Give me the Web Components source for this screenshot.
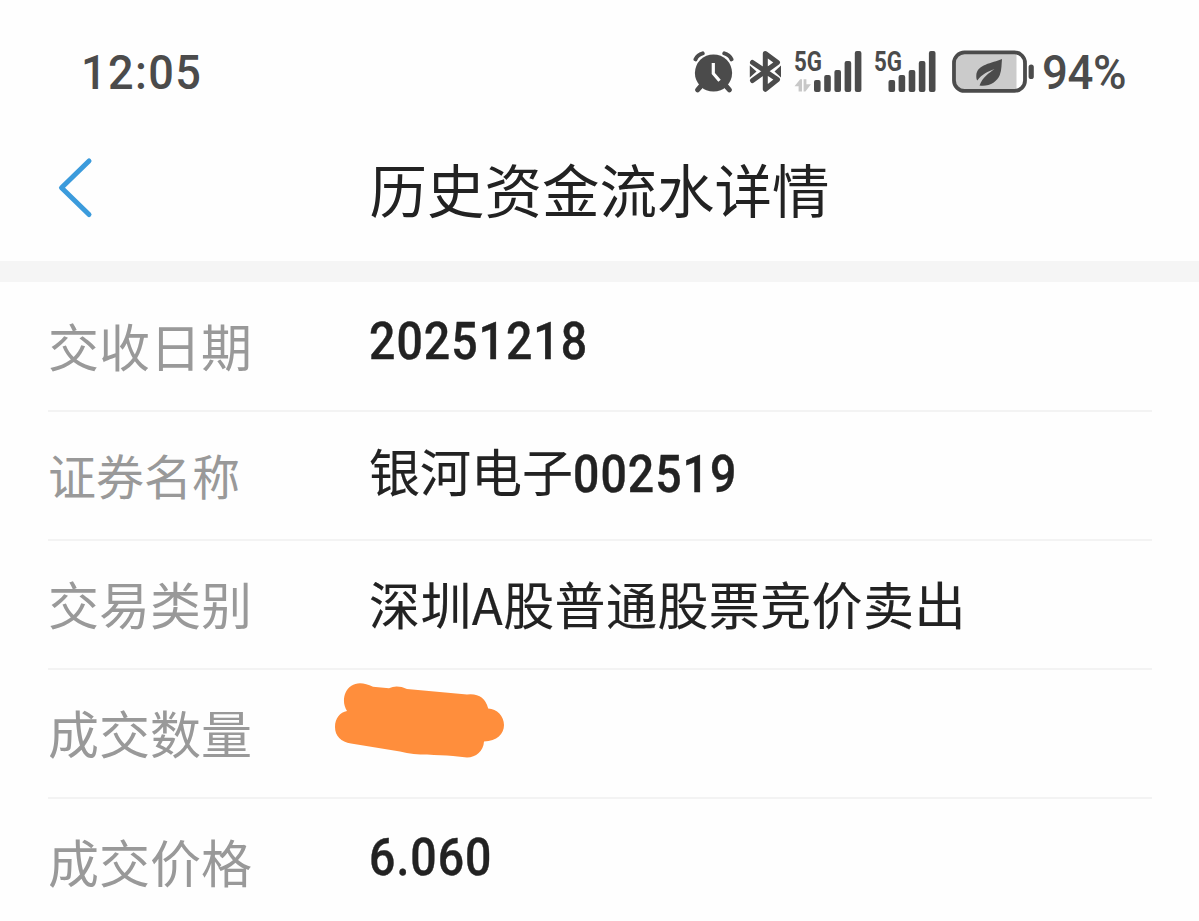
<!DOCTYPE html>
<html lang="zh-CN">
<head>
<meta charset="utf-8">
<meta name="viewport" content="width=device-width, initial-scale=1">
<title>历史资金流水详情</title>
<style>
    html, body{
        margin: 0;
        background: #fefefe;
    }

    body{
        height: 921px;
        overflow: hidden;
        font-family: Roboto, "Noto Sans CJK SC", sans-serif;
        color: #222;
    }
</style>
</head>
<body>
<flow-page>
    <status-bar slot="top" time="12:05" battery="94"></status-bar>
    <nav-header slot="top">历史资金流水详情</nav-header>
    <detail-row label="交收日期" class="number"><span>20251218</span></detail-row>
    <detail-row label="证券名称" class="compact">银河电子<span>002519</span></detail-row>
    <detail-row label="交易类别">深圳A股普通股票竞价卖出</detail-row>
    <detail-row label="成交数量"><marker-blot></marker-blot></detail-row>
    <detail-row label="成交价格" class="number"><span>6.060</span></detail-row>
</flow-page>

<script>
class FlowPage extends HTMLElement{
    constructor(){
        super();
        this.attachShadow({ mode: 'open' });
        this.shadowRoot.innerHTML = `
            <style>
                :host{
                    display: flex;
                    flex-direction: column;
                    height: 921px;
                    overflow: hidden;
                }

                .band{
                    flex: none;
                    height: 21px;
                    background: #f5f5f5;
                }

                main{
                    display: flex;
                    flex-direction: column;
                    padding: 1px 47px 0 48px;
                }
            </style>
            <slot name="top"></slot>
            <div class="band"></div>
            <main><slot></slot></main>
        `;
    }
}

class SignalBars extends HTMLElement{
    constructor(){
        super();
        this.attachShadow({ mode: 'open' });
    }

    connectedCallback(){
        let data = this.hasAttribute("data");
        // the data sim is wider, it has the up/down arrows before the bars
        let x = data ? 20 : 14.5;
        let step = data ? 10.2 : 10.1;
        let bars = [12, 17, 22, 31, 41].map((h, i) =>
            `<rect x="${x + i * step}" y="${42 - h}" width="6.6" height="${h}" rx="2"/>`
        ).join("");
        let arrows = data
            ? `<path fill="#c8c8c8" d="M0.5 36.2L6.2 29.2H8V41.5H4.6V36.2ZM9.6 29.2H12.4V34.3H17L11.4 41.5H9.6Z"/>`
            : "";
        this.shadowRoot.innerHTML = `
            <style>
                :host{
                    display: block;
                    width: ${data ? 68 : 62}px;
                    height: 42px;
                }

                svg{
                    display: block;
                    overflow: visible;
                }

                text{
                    font: 700 27px Roboto, sans-serif;
                }
            </style>
            <svg width="68" height="42" fill="#4b4b4b">
                <text x="0" y="20.5" textLength="28" lengthAdjust="spacingAndGlyphs">5G</text>
                ${bars}
                ${arrows}
            </svg>
        `;
    }
}

class StatusBar extends HTMLElement{
    constructor(){
        super();
        this.attachShadow({ mode: 'open' });
    }

    connectedCallback(){
        this.shadowRoot.innerHTML = `
            <style>
                :host{
                    display: flex;
                    justify-content: space-between;
                    flex: none;
                    box-sizing: border-box;
                    height: 144px;
                    padding: 43px 72px 0 81px;
                    color: #4b4b4b;
                    font-size: 49px;
                    font-weight: 500;
                    line-height: 60px;
                }

                .time{
                    letter-spacing: 1.5px;
                    transform: scaleX(0.92);
                    transform-origin: left;
                }

                .icons{
                    display: flex;
                    align-items: flex-start;
                }

                .icons > *{
                    flex: none;
                }

                svg, signal-bars{
                    display: block;
                    margin-top: 7px;
                }

                .battery{
                    width: 85px;
                    letter-spacing: -0.4px;
                    white-space: nowrap;
                    transform: scaleX(0.93);
                    transform-origin: left;
                }
            </style>
            <div class="time">${this.getAttribute("time")}</div>
            <div class="icons">
                <svg width="56" height="44" viewBox="0 0 56 44">
                    <g fill="none" stroke="#4b4b4b" stroke-linecap="round">
                        <path stroke-width="4" d="M2.5 9.3Q4.7 4.6 9.7 3.4M38.5 9.3Q36.3 4.6 31.3 3.4"/>
                        <path stroke-width="5" d="M8 36L4.6 39.8M33 36L36.4 39.8"/>
                    </g>
                    <circle cx="20.5" cy="23" r="18.6" fill="#4b4b4b"/>
                    <path d="M20.3 14.5V23.5L25.5 29.5" fill="none" stroke="#fff" stroke-width="3.2" stroke-linecap="square"/>
                </svg>
                <svg width="45" height="44" viewBox="0 0 45 44">
                    <path d="M3.5 12.5L28.5 29.5L16.3 39.3V3.5L28.5 12.5L3.5 30.5" fill="none" stroke="#4b4b4b" stroke-width="5" stroke-linejoin="round" stroke-linecap="round"/>
                    <path d="M0.8 15.5L7.5 21.5L0.8 27.5ZM32 15.5L25.5 21.5L32 27.5Z" fill="#4b4b4b"/>
                </svg>
                <signal-bars data style="margin-right: 12px"></signal-bars>
                <signal-bars style="margin-right: 16px"></signal-bars>
                <svg width="90" height="44" viewBox="0 0 90 44">
                    <rect x="2" y="2.5" width="71" height="38.5" rx="9" fill="#fff"/>
                    <path d="M11 4H64.5V39.5H11Q4 39.5 4 32.5V11Q4 4 11 4Z" fill="#cbcbcb"/>
                    <rect x="2" y="2.4" width="71" height="38.5" rx="10.5" fill="none" stroke="#4b4b4b" stroke-width="3.8"/>
                    <path d="M50 9C40 13.5 25 14 24.3 25.5C24.2 27.8 24.4 29 25.3 30.5C30 24 36 21.5 42.5 19C37 23 30.5 27.5 27.5 35.5C37 37 45 32 47.8 25C49.8 19.5 49.5 14 50 9Z" fill="#4b4b4b"/>
                    <rect x="76.6" y="14.5" width="5.2" height="14.5" rx="2.6" fill="#4b4b4b"/>
                </svg>
                <div class="battery">${this.getAttribute("battery")}%</div>
            </div>
        `;
    }
}

class NavHeader extends HTMLElement{
    constructor(){
        super();
        this.attachShadow({ mode: 'open' });
        this.shadowRoot.innerHTML = `
            <style>
                :host{
                    display: grid;
                    grid-template-columns: 140px 1fr 140px;
                    flex: none;
                    height: 117px;
                }

                svg{
                    display: block;
                    margin: 12px 0 0 56px;
                }

                h1{
                    margin: 0;
                    padding-top: 4px;
                    font: 400 57.5px/80px "Noto Sans CJK SC", sans-serif;
                    text-align: center;
                    white-space: nowrap;
                }
            </style>
            <svg width="40" height="64" viewBox="0 0 40 64">
                <path d="M33 5L5.5 31.8L33 58.5" fill="none" stroke="#3b9bdc" stroke-width="5" stroke-linecap="round" stroke-linejoin="round"/>
            </svg>
            <h1><slot></slot></h1>
        `;
    }
}

class DetailRow extends HTMLElement{
    constructor(){
        super();
        this.attachShadow({ mode: 'open' });
    }

    connectedCallback(){
        this.shadowRoot.innerHTML = `
            <style>
                :host{
                    display: grid;
                    grid-template-columns: 321px 1fr;
                    box-sizing: border-box;
                    height: 129px;
                    border-bottom: 2px solid #f3f3f3;
                }

                .label{
                    padding-top: 25px;
                    font: 400 51px/74px "Noto Sans CJK SC", sans-serif;
                    color: #999;
                }

                .value{
                    padding-top: 25px;
                    font: 400 51px/74px "Noto Sans CJK SC", sans-serif;
                    -webkit-text-stroke: 0.15px #222;
                    letter-spacing: 0.4px;
                    white-space: nowrap;
                }

                :host(.compact) .label{
                    font-size: 48px;
                }

                :host(.compact) .value{
                    padding-top: 21px;
                    letter-spacing: 0;
                }

                :host(.number) .value{
                    padding-top: 17px;
                }

                /* narrow digits with a wider gap */
                ::slotted(span){
                    display: inline-block;
                    font-family: Roboto, sans-serif;
                    font-weight: 500;
                    -webkit-text-stroke: 0.4px #222;
                    letter-spacing: 1.1px;
                    transform: scaleX(0.91);
                    transform-origin: left;
                }
            </style>
            <div class="label">${this.getAttribute("label")}</div>
            <div class="value"><slot></slot></div>
        `;
    }
}

class MarkerBlot extends HTMLElement{
    constructor(){
        super();
        this.attachShadow({ mode: 'open' });
        this.shadowRoot.innerHTML = `
            <style>
                :host{
                    display: block;
                    margin: -25px 0 0 -49px;
                }

                svg{
                    display: block;
                }
            </style>
            <svg width="200" height="100" viewBox="0 0 200 100">
                <path fill="#ff8e3c" d="M40 13.2Q46 13.2 53 16.8L69 18.2Q77 14.5 87 19L147 24.5Q164 22.5 168.2 38.5C177 39 184 46 184 55C184 64 177 71 164 71.5C163.5 81 156 87.5 147 87.5L133 86C117 84.5 98 86 80 81.5L31 73.5C21 72 15 66 15 57C15 48 20 42.5 27 41C19.5 28 27 13.2 40 13.2Z"/>
            </svg>
        `;
    }
}

customElements.define('flow-page', FlowPage);
customElements.define('signal-bars', SignalBars);
customElements.define('status-bar', StatusBar);
customElements.define('nav-header', NavHeader);
customElements.define('detail-row', DetailRow);
customElements.define('marker-blot', MarkerBlot);
</script>
</body>
</html>
